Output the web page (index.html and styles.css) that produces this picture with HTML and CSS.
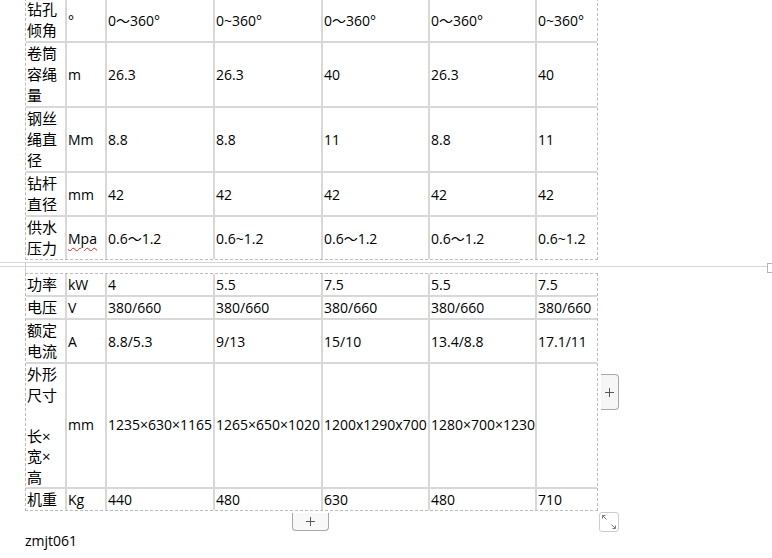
FILE: index.html
```html
<!DOCTYPE html>
<html lang="zh-CN">
<head>
<meta charset="utf-8">
<title>参数表</title>
<link rel="stylesheet" href="styles.css">
</head>
<body>
<div class="doc">
  <table class="grid grid-top">
    <colgroup>
      <col class="c-lbl"><col class="c-unit"><col class="c-wide"><col class="c-wide"><col class="c-mid"><col class="c-mid"><col class="c-last">
    </colgroup>
    <tr>
      <td class="lbl">钻孔<br>倾角</td><td>°</td><td>0～360°</td><td>0~360°</td><td>0～360°</td><td>0～360°</td><td>0~360°</td>
    </tr>
    <tr>
      <td class="lbl">卷筒<br>容绳<br>量</td><td>m</td><td>26.3</td><td>26.3</td><td>40</td><td>26.3</td><td>40</td>
    </tr>
    <tr>
      <td class="lbl">钢丝<br>绳直<br>径</td><td>Mm</td><td>8.8</td><td>8.8</td><td>11</td><td>8.8</td><td>11</td>
    </tr>
    <tr>
      <td class="lbl">钻杆<br>直径</td><td>mm</td><td>42</td><td>42</td><td>42</td><td>42</td><td>42</td>
    </tr>
    <tr>
      <td class="lbl">供水<br>压力</td><td><span class="spell">Mpa</span></td><td>0.6～1.2</td><td>0.6~1.2</td><td>0.6～1.2</td><td>0.6～1.2</td><td>0.6~1.2</td>
    </tr>
  </table>

  <div class="pagebreak">
    <div class="pb-upper"></div>
    <div class="pb-lower"></div>
    <span class="pb-edge"></span>
    <span class="pb-mark"></span>
  </div>

  <div class="lower">
    <table class="grid">
      <colgroup>
        <col class="c-lbl"><col class="c-unit"><col class="c-wide"><col class="c-wide"><col class="c-mid"><col class="c-mid"><col class="c-last">
      </colgroup>
      <tr>
        <td class="lbl">功率</td><td>kW</td><td>4</td><td>5.5</td><td>7.5</td><td>5.5</td><td>7.5</td>
      </tr>
      <tr>
        <td class="lbl">电压</td><td>V</td><td>380/660</td><td>380/660</td><td>380/660</td><td>380/660</td><td>380/660</td>
      </tr>
      <tr>
        <td class="lbl">额定<br>电流</td><td>A</td><td>8.8/5.3</td><td>9/13</td><td>15/10</td><td>13.4/8.8</td><td>17.1/11</td>
      </tr>
      <tr class="tall">
        <td class="lbl">外形<br>尺寸<br><br>长×<br>宽×<br>高</td><td>mm</td><td>1235×630×1165</td><td>1265×650×1020</td><td>1200x1290x700</td><td>1280×700×1230</td><td></td>
      </tr>
      <tr>
        <td class="lbl">机重</td><td>Kg</td><td>440</td><td>480</td><td>630</td><td>480</td><td>710</td>
      </tr>
    </table>
    <div class="add-col"><svg width="9" height="9" viewBox="0 0 9 9"><path d="M4.5 0v9M0 4.5h9" stroke="#5a5a5a" stroke-width="1" fill="none"/></svg></div>
    <div class="add-row"><svg width="9" height="9" viewBox="0 0 9 9"><path d="M4.5 0v9M0 4.5h9" stroke="#5a5a5a" stroke-width="1" fill="none"/></svg></div>
    <div class="resize"><svg width="20" height="20" viewBox="0 0 20 20"><path d="M3.5 6.5V3.5H6.5M3.5 3.5L7.5 7.5M16.5 13.5V16.5H13.5M16.5 16.5L12.5 12.5" stroke="#7a7a7a" stroke-width="1" fill="none"/></svg></div>
  </div>

  <p class="para">zmjt061</p>
</div>
</body>
</html>
```

FILE: styles.css
```css
html, body {
  margin: 0;
  padding: 0;
  background: #ffffff;
}

body {
  font-family: "Open Sans", "Noto Sans CJK SC", sans-serif;
  font-size: 14px;
  color: #000000;
  overflow: hidden;
}

.doc {
  padding-left: 25px;
}

.grid {
  border-collapse: separate;
  border-spacing: 0;
  table-layout: fixed;
  width: 573px;
  border: 1px dashed #bcbcbc;
}

.grid-top {
  margin-top: -2px;
}

.c-lbl { width: 41px; }
.c-unit { width: 40px; }
.c-wide { width: 108px; }
.c-mid { width: 107px; }
.c-last { width: 60px; }

.grid td {
  border-right: 2px solid #d8d8d8;
  border-bottom: 2px solid #d8d8d8;
  padding: 0 0 0 1px;
  line-height: 21px;
  height: 21px;
  vertical-align: middle;
  white-space: nowrap;
  overflow: visible;
}

.grid td:last-child {
  border-right: none;
}

.grid tr:last-child td {
  border-bottom: none;
}

.grid td.lbl {
  font-size: 15px;
}

.grid tr.tall td {
  line-height: 20.5px;
}

.spell {
  text-decoration: underline wavy #e0201b;
  text-decoration-thickness: 1px;
  text-underline-offset: 3px;
}

.pagebreak {
  position: relative;
  height: 11px;
  margin-left: -25px;
}

.pb-upper {
  width: 520px;
  height: 1px;
  margin-top: 2px;
  background: #d6d6d6;
}

.pb-lower {
  width: 767px;
  height: 1px;
  margin-top: 3px;
  background: #d6d6d6;
}

.pb-edge {
  position: absolute;
  left: 25px;
  top: 0;
  width: 1px;
  height: 11px;
  background: #cfcfcf;
}

.pb-mark {
  position: absolute;
  left: 767px;
  top: 1px;
  width: 10px;
  height: 10px;
  box-sizing: border-box;
  border: 1px solid #b4b4b4;
}

.lower {
  position: relative;
  width: 573px;
}

.add-col {
  position: absolute;
  left: 576px;
  top: 50%;
  transform: translateY(-50%);
  width: 18px;
  height: 36px;
  box-sizing: border-box;
  border: 1px solid #a8a8a8;
  border-left: none;
  border-radius: 0 4px 4px 0;
  background: #f6f6f6;
  display: flex;
  align-items: center;
  justify-content: center;
}

.add-row {
  position: absolute;
  left: 267px;
  top: calc(100% + 2px);
  width: 37px;
  height: 18px;
  box-sizing: border-box;
  border: 1px solid #a8a8a8;
  border-top: none;
  border-radius: 0 0 4px 4px;
  background: #f8f8f8;
  display: flex;
  align-items: center;
  justify-content: center;
}

.resize {
  position: absolute;
  left: 574px;
  top: calc(100% + 1px);
  width: 20px;
  height: 20px;
  box-sizing: border-box;
  border: 1px solid #cdcdcd;
  border-radius: 3px;
  background: #ffffff;
  display: flex;
  align-items: center;
  justify-content: center;
}

.resize svg {
  display: block;
  margin: -1px;
}

.para {
  margin: 19px 0 0;
  line-height: 21px;
  font-size: 14px;
}
```
